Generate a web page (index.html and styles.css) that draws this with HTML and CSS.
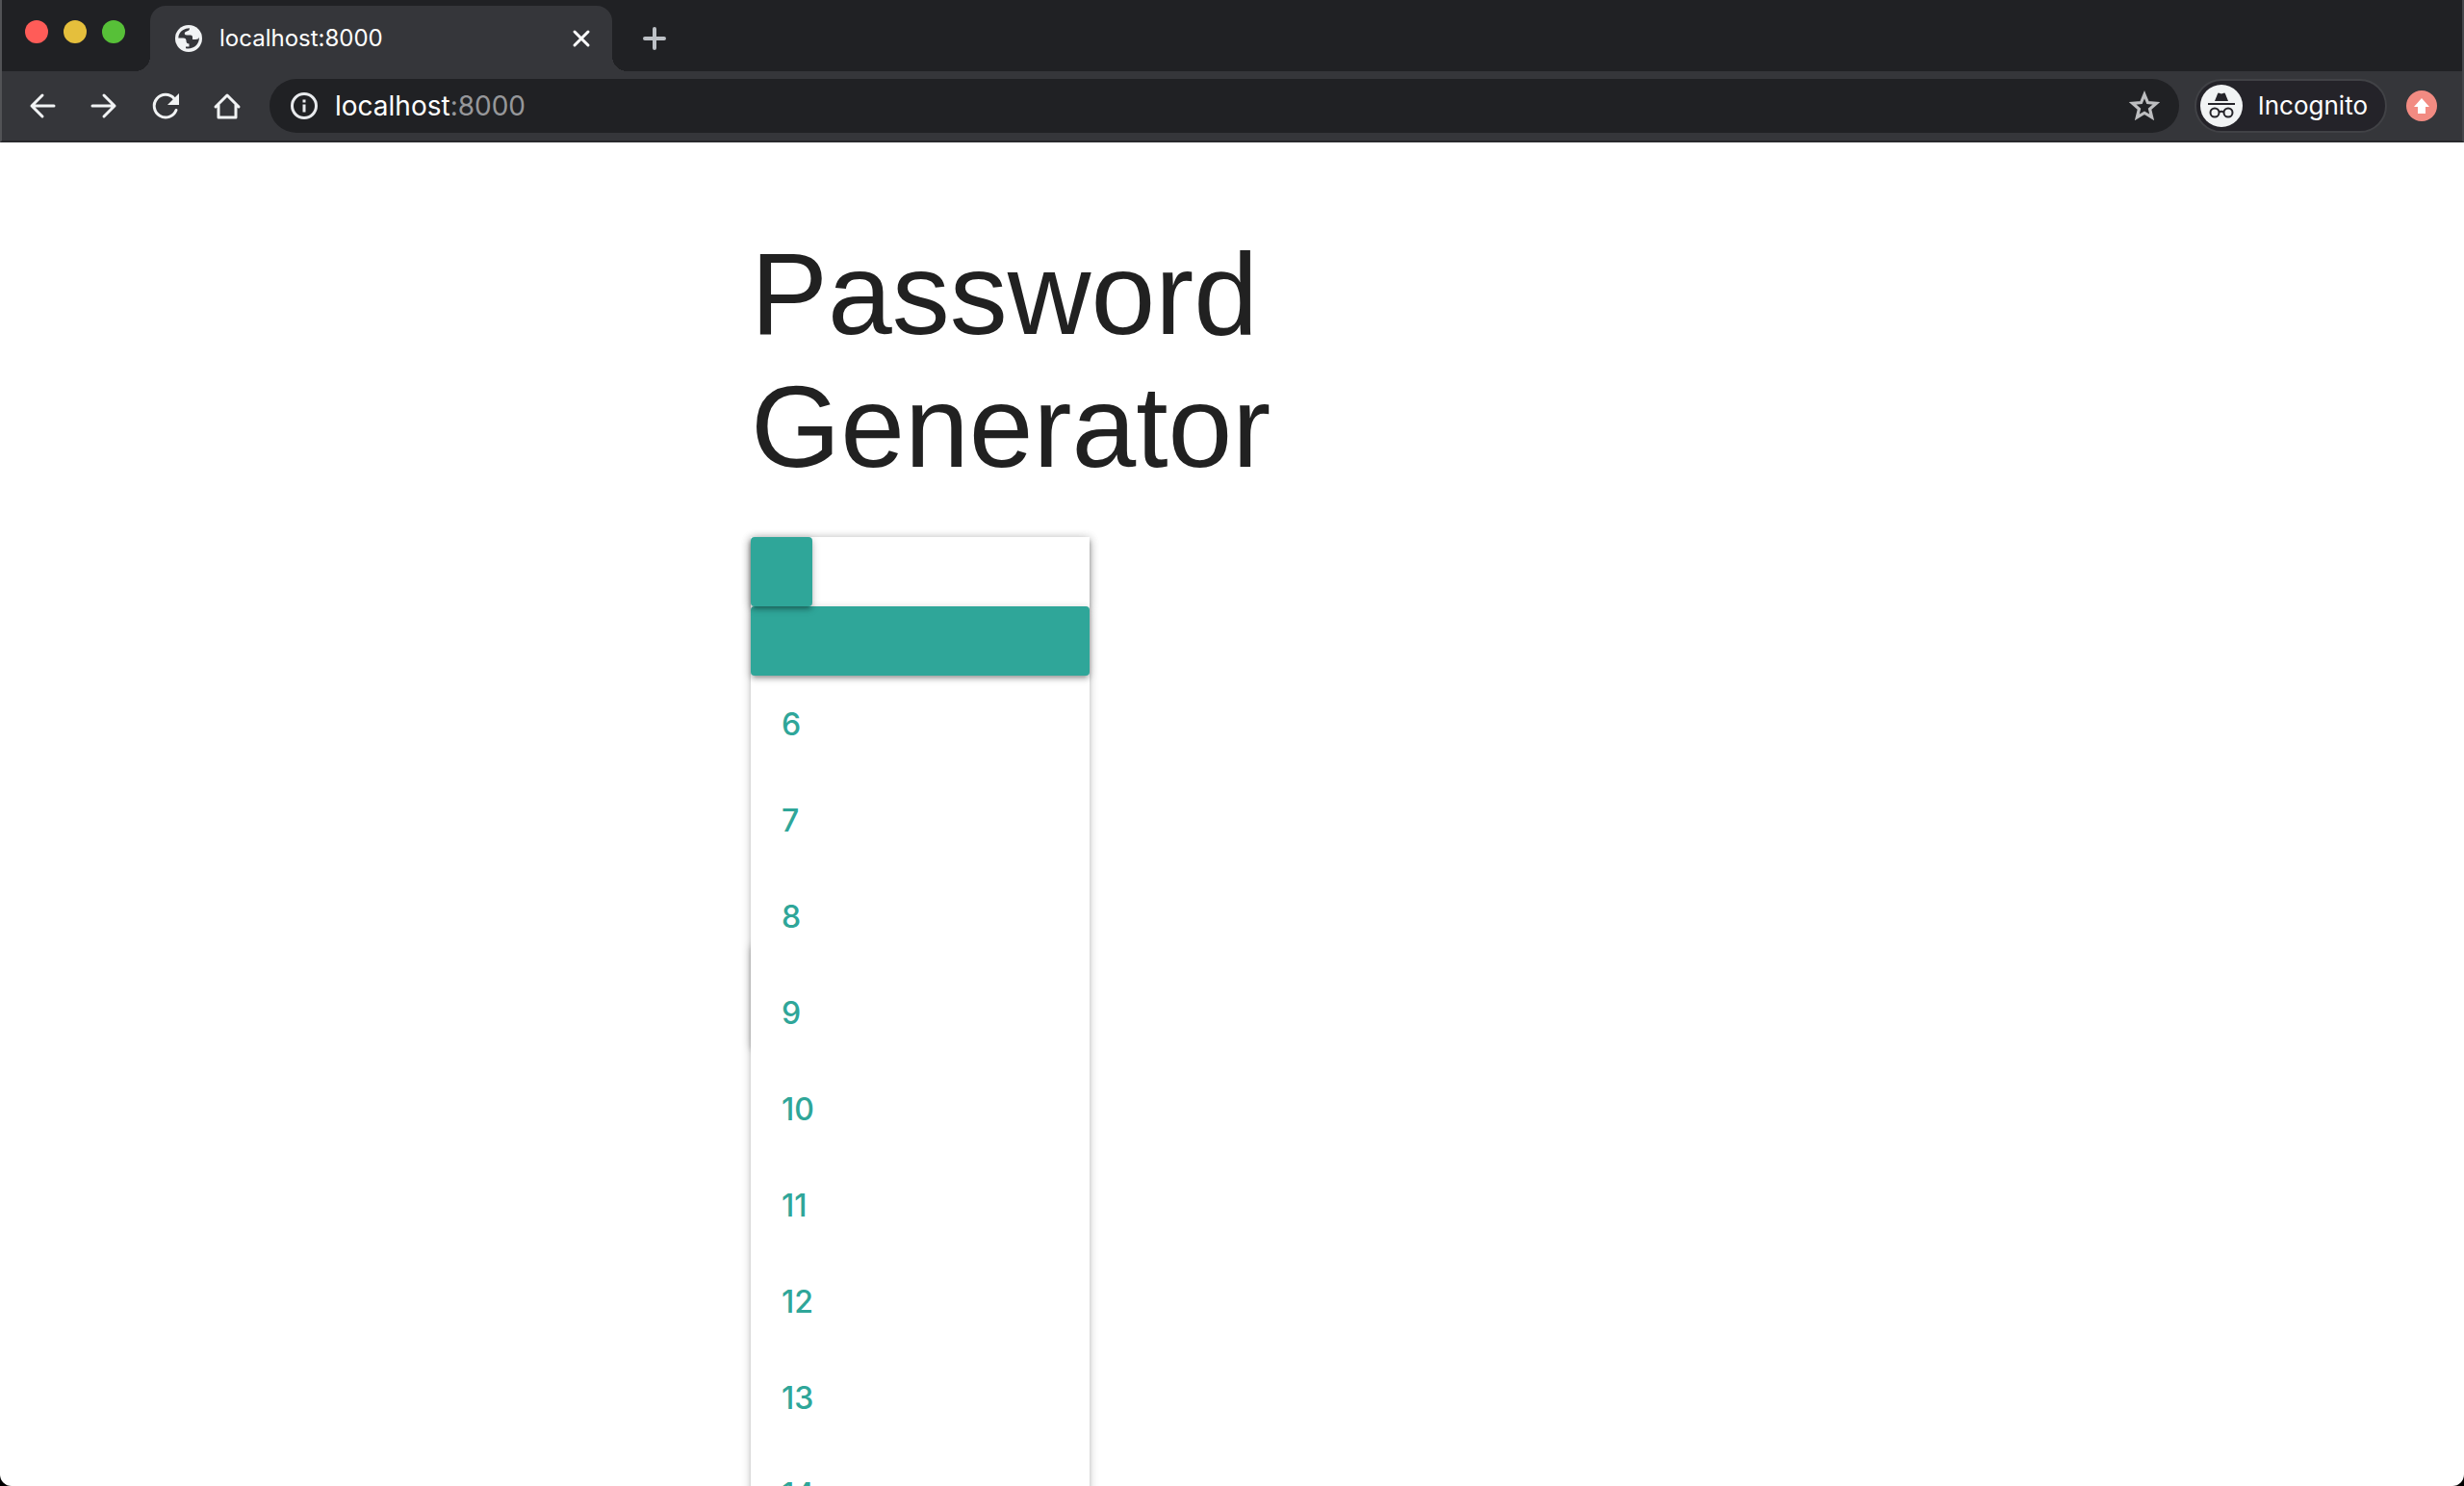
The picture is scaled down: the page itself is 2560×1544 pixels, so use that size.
FILE: index.html
```html
<!DOCTYPE html>
<html lang="en">
<head>
<meta charset="utf-8">
<meta name="viewport" content="width=device-width, initial-scale=1">
<title>localhost:8000</title>
<link rel="stylesheet" href="styles.css">
</head>
<body>
<div class="window">
  <header class="chrome">
    <div class="tab-strip">
      <div class="lights">
        <button class="light light-close" aria-label="Close window"></button>
        <button class="light light-min" aria-label="Minimize window"></button>
        <button class="light light-max" aria-label="Zoom window"></button>
      </div>
      <div class="tab">
        <svg class="favicon" viewBox="0 0 28 28" aria-hidden="true"><circle cx="14" cy="14" r="14"/><path d="M3.300 13.500Q3.500 8 8 5.300 11 3.300 15 3.300 15 6 12 6.500 9.500 7 9.700 9 10 10.500 12.500 10.500H16Q18 10.500 18 12.500V15H21Q24.500 15 24.800 12.500 25.300 17 22 21 18 25 11 24.300V22.500H14.500V19.500Q11.500 19.500 11.500 16.500 11.500 13.500 8.500 13.500z"/></svg>
        <span class="tab-title">localhost:8000</span>
        <button class="icon-button" aria-label="Close tab"><svg class="icon-close" viewBox="0 0 20 20" aria-hidden="true"><path d="M3 3l14 14M17 3L3 17"/></svg></button>
      </div>
      <button class="icon-button new-tab" aria-label="New tab"><svg class="icon-plus" viewBox="0 0 24 24" aria-hidden="true"><path d="M12 2v20M2 12h20"/></svg></button>
    </div>
    <nav class="toolbar" aria-label="Browser toolbar">
      <div class="nav-buttons">
        <button class="icon-button" aria-label="Back"><svg class="icon-nav" viewBox="0 0 32 32" aria-hidden="true"><path d="M28 16H5M16 5L5 16l11 11"/></svg></button>
        <button class="icon-button" aria-label="Forward"><svg class="icon-nav" viewBox="0 0 32 32" aria-hidden="true"><path d="M4 16h23M16 5l11 11-11 11"/></svg></button>
        <button class="icon-button" aria-label="Reload"><svg class="icon-nav" viewBox="0 0 32 32" aria-hidden="true"><path d="M27 20.500A11.800 11.800 0 1 1 25 8.500"/><path class="solid" d="M30 3v12H18z"/></svg></button>
        <button class="icon-button" aria-label="Home"><svg class="icon-nav" viewBox="0 0 32 32" aria-hidden="true"><path d="M4 17L16 5l12 12M7 15v13h18V15"/></svg></button>
      </div>
      <div class="omnibox">
        <svg class="icon-info" viewBox="0 0 28 28" aria-hidden="true"><circle cx="14" cy="14" r="12.500"/><path d="M14 12.500v8M14 7.500v3"/></svg>
        <div class="address" role="textbox" contenteditable="true" spellcheck="false" aria-label="Address">localhost<span class="port">:8000</span></div>
        <button class="icon-button" aria-label="Bookmark this page"><svg class="icon-star" viewBox="0 0 30 30" aria-hidden="true"><path d="M15 4l3.200 7.800 8.400.7-6.400 5.500 2 8.200L15 21.800l-7.200 4.400 2-8.200-6.400-5.500 8.400-.7z"/></svg></button>
      </div>
      <button class="incognito">
        <svg class="avatar" viewBox="0 0 44 44" aria-hidden="true"><circle class="disc" cx="22" cy="22" r="22"/><path d="M15 17l3-7.500q.4-1.200 1.600-.8l2.400.8 2.400-.8q1.200-.4 1.600.8L29 17z"/><path d="M8 19h28v2H8z"/><g class="glasses"><circle cx="15" cy="29" r="4.500"/><circle cx="29" cy="29" r="4.500"/><path d="M19.500 28.500q2.500-1.500 5 0"/></g></svg>
        <span>Incognito</span>
      </button>
      <button class="icon-button update" aria-label="Update available"><svg class="icon-update" viewBox="0 0 32 32" aria-hidden="true"><circle cx="16" cy="16" r="16"/><path d="M16 8l8 9h-4v7h-8v-7H8z"/></svg></button>
    </nav>
  </header>
  <main class="page">
    <div class="container">
      <h1 class="title">Password Generator</h1>
      <div class="select">
        <button class="trigger" aria-label="Password length"></button>
        <ul class="menu">
          <li><button class="fill fill-small" aria-label="Length"></button></li>
          <li><button class="fill fill-wide" aria-label="Generate"></button></li>
          <li><a class="option" href="#6">6</a></li>
          <li><a class="option" href="#7">7</a></li>
          <li><a class="option" href="#8">8</a></li>
          <li><a class="option" href="#9">9</a></li>
          <li><a class="option" href="#10">10</a></li>
          <li><a class="option" href="#11">11</a></li>
          <li><a class="option" href="#12">12</a></li>
          <li><a class="option" href="#13">13</a></li>
          <li><a class="option" href="#14">14</a></li>
        </ul>
      </div>
      <button class="submit" aria-label="Generate password"></button>
    </div>
  </main>
</div>
</body>
</html>
```
FILE: styles.css
```css
* { box-sizing: border-box; }

body {
  margin: 0;
  background: #000;
  font-family: Inter, Roboto, sans-serif;
}

button {
  padding: 0;
  border: 0;
  background: none;
  font: inherit;
  color: inherit;
}

.window {
  display: flex;
  flex-direction: column;
  height: 100vh;
  overflow: hidden;
  border-radius: 0 0 12px 12px;
  background: #fff;
}

/* Browser frame */
.chrome {
  flex: none;
  border-left: 2px solid #525356;
  border-right: 2px solid #45464a;
  border-bottom: 2px solid #28292c;
  background: #35363a;
  color: #fff;
}

.tab-strip {
  display: flex;
  align-items: flex-end;
  height: 74px;
  background: #202124;
}

.lights {
  display: flex;
  align-self: flex-start;
  gap: 16px;
  width: 154px;
  padding: 21px 0 0 24px;
}

.light {
  width: 24px;
  height: 24px;
  border-radius: 50%;
}
.light-close { background: #ff5c58; }
.light-min { background: #e5bf3c; }
.light-max { background: #57c038; }

.tab {
  position: relative;
  display: flex;
  align-items: center;
  gap: 18px;
  width: 480px;
  height: 68px;
  padding: 0 22px 0 26px;
  border-radius: 16px 16px 0 0;
  background: #35363a;
}

/* Concave feet where the tab meets the toolbar */
.tab::before,
.tab::after {
  content: "";
  position: absolute;
  bottom: 0;
  width: 16px;
  height: 16px;
}
.tab::before {
  right: 100%;
  background: radial-gradient(circle at 0 0, #202124 16px, #35363a 16px);
}
.tab::after {
  left: 100%;
  background: radial-gradient(circle at 100% 0, #202124 16px, #35363a 16px);
}

.favicon { width: 28px; height: 28px; fill: #f1f3f4; }
.favicon path { fill: #35363a; }
.tab-title { flex: 1; font-size: 24px; line-height: 32px; }

.icon-button { display: flex; align-items: center; justify-content: center; }

.icon-close { width: 20px; height: 20px; stroke: #fff; stroke-width: 3; stroke-linecap: round; }
.new-tab { height: 68px; margin-left: 32px; }
.icon-plus { width: 24px; height: 24px; stroke: #bdc1c6; stroke-width: 4; stroke-linecap: round; }

.toolbar {
  display: flex;
  align-items: center;
  height: 72px;
  padding: 0 26px;
}

.nav-buttons { display: flex; gap: 32px; width: 252px; }
.icon-nav {
  width: 32px;
  height: 32px;
  fill: none;
  stroke: #f1f3f4;
  stroke-width: 3;
  stroke-linecap: round;
  stroke-linejoin: round;
}
.icon-nav .solid { fill: #f1f3f4; stroke: none; }

.omnibox {
  display: flex;
  flex: 1;
  align-items: center;
  gap: 18px;
  height: 56px;
  padding: 0 20px 0 22px;
  border-radius: 28px;
  background: #202124;
}
.icon-info { width: 28px; height: 28px; fill: none; stroke: #e8eaed; stroke-width: 3; }
.address { flex: 1; font-size: 28px; line-height: 36px; outline: 0; }
.port { color: #96979a; }
.icon-star { width: 32px; height: 32px; fill: none; stroke: #bdbec0; stroke-width: 3; }

.incognito {
  display: flex;
  align-items: center;
  gap: 16px;
  height: 56px;
  margin-left: 16px;
  padding: 0 18px 0 4px;
  border: 2px solid #414246;
  border-radius: 28px;
  background: #242329;
  font-size: 26px;
  line-height: 32px;
}
.avatar { width: 44px; height: 44px; fill: #242329; }
.avatar .disc { fill: #f1f3f4; }
.glasses { fill: none; stroke: #242329; stroke-width: 2; }

.update { margin-left: 20px; }
.icon-update { width: 32px; height: 32px; fill: #f28b82; }
.icon-update path { fill: #fff; }

/* Page */
.page { flex: 1; min-height: 0; }

.container {
  width: 100%;
  max-width: 1000px;
  margin: 0 auto;
  padding-top: 88px;
}

.title {
  width: 600px;
  margin: 0 0 46px;
  color: #212121;
  font-family: "Liberation Sans", Arial, sans-serif;
  font-size: 120px;
  font-weight: 400;
  line-height: 138px;
}

.select { position: relative; width: 352px; }

.trigger,
.fill,
.submit,
.menu {
  box-shadow: 0 4px 4px rgba(0, 0, 0, .14), 0 6px 2px -4px rgba(0, 0, 0, .12), 0 2px 10px rgba(0, 0, 0, .2);
}

.trigger { display: block; width: 100%; height: 72px; }

.menu {
  position: absolute;
  z-index: 1;
  top: 0;
  left: 0;
  width: 100%;
  margin: 0;
  padding: 0;
  background: #fff;
  list-style: none;
}

.fill {
  display: block;
  position: relative;
  height: 72px;
  border-radius: 4px;
  background: #2fa699;
}
.fill-small { z-index: 1; width: 64px; }
.fill-wide { width: 100%; }

.option {
  display: block;
  padding: 29px 32px 27px;
  color: #2fa699;
  font-size: 32px;
  font-weight: 450;
  line-height: 44px;
  text-decoration: none;
}

.submit {
  display: block;
  width: 320px;
  height: 108px;
  margin-top: 350px;
  border-radius: 4px;
}
```
